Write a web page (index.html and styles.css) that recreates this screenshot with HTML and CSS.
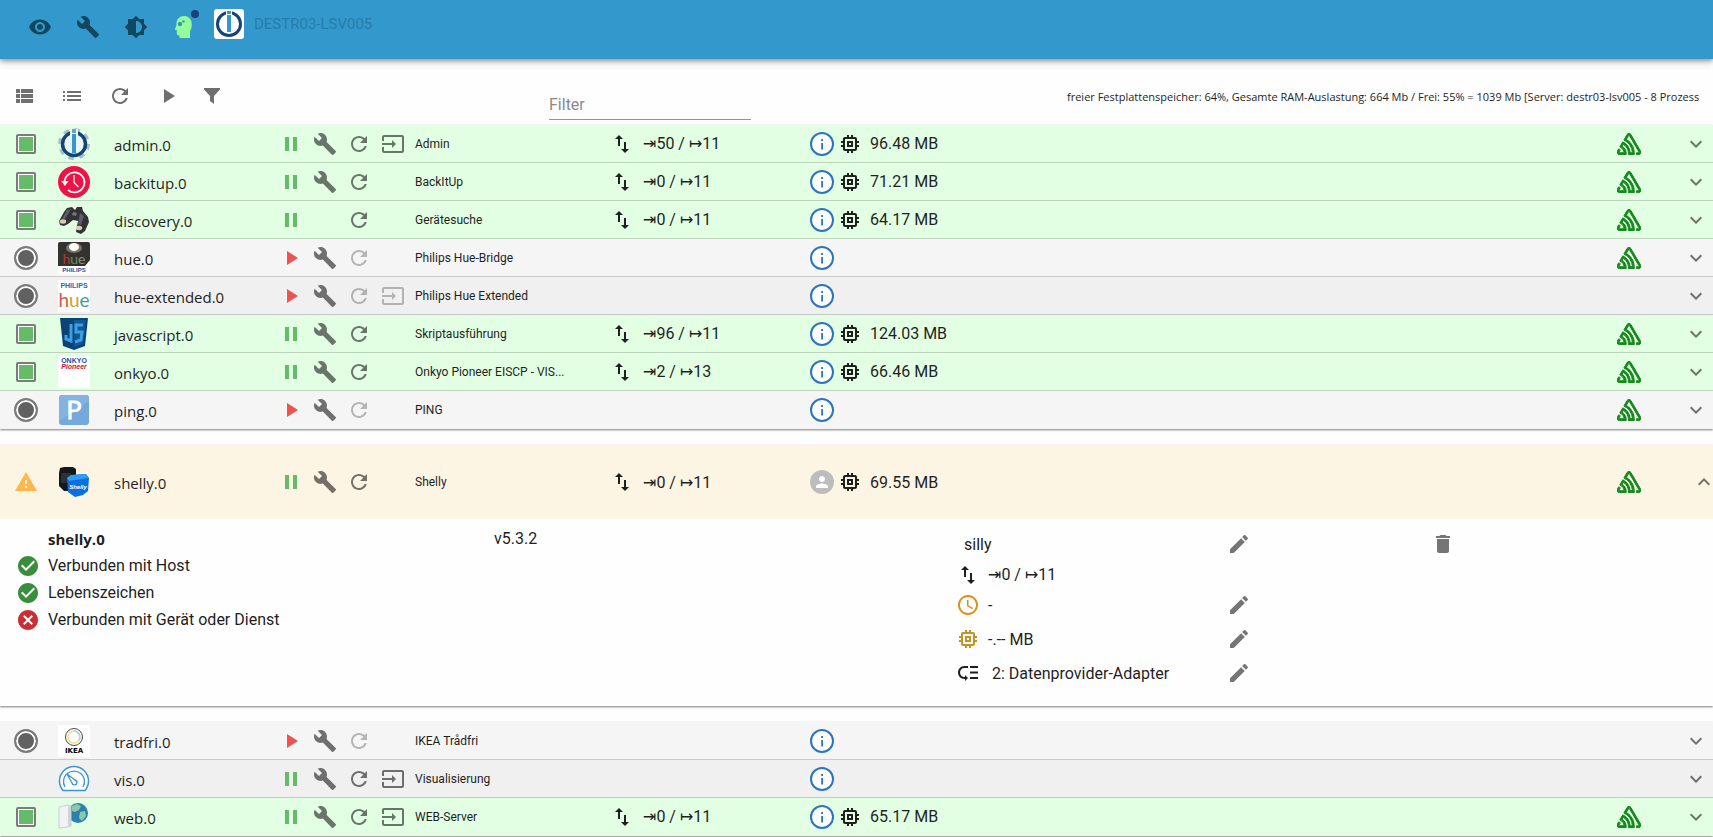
FILE: index.html
```html
<!DOCTYPE html>
<html lang="de">
<head>
  <meta charset="UTF-8">
  <meta name="viewport" content="width=device-width, initial-scale=1.0">
  <title>Instanzen</title>
  <link rel="stylesheet" href="styles.css">
</head>
<body>
  <!-- Icon sprite -->
  <svg class="sprite">
    <symbol id="eye" viewBox="0 0 24 24"><path d="M12 4.5C7 4.5 2.73 7.61 1 12c1.73 4.39 6 7.5 11 7.5s9.27-3.11 11-7.5c-1.73-4.39-6-7.5-11-7.5zM12 17c-2.76 0-5-2.24-5-5s2.24-5 5-5 5 2.24 5 5-2.24 5-5 5zm0-8c-1.66 0-3 1.34-3 3s1.34 3 3 3 3-1.34 3-3-1.34-3-3-3z"/></symbol>
    <symbol id="wrench" viewBox="0 0 24 24"><path d="M22.7 19l-9.1-9.1c.9-2.3.4-5-1.5-6.9-2-2-5-2.4-7.4-1.3L9 6 6 9 1.6 4.7C.4 7.1.9 10.1 2.9 12.1c1.9 1.9 4.6 2.4 6.9 1.5l9.1 9.1c.4.4 1 .4 1.4 0l2.3-2.3c.5-.4.5-1.1.1-1.4z"/></symbol>
    <symbol id="brightness" viewBox="0 0 24 24"><path d="M20 15.31L23.31 12 20 8.69V4h-4.69L12 .69 8.69 4H4v4.69L.69 12 4 15.31V20h4.69L12 23.31 15.31 20H20v-4.69zM12 18V6c3.31 0 6 2.69 6 6s-2.69 6-6 6z"/></symbol>
    <symbol id="head" viewBox="0 0 24 24"><path d="M12.500 1C7.500 1 4.500 4.300 4.500 8.500v1.500L3 14c-.2.600.1 1 .7 1h1.100v3.500c0 1.100.9 2 2 2H7.500V23H18v-7c1.300-1.600 1.800-4 1.800-6.500C19.800 4.600 17 1 12.500 1z"/><g fill="#3a94b8"><circle cx="8" cy="9" r="2.200"/><circle cx="11.500" cy="6.500" r="1.200"/></g></symbol>
    <symbol id="view-list" viewBox="0 0 24 24"><path d="M4 14h4v-4H4v4zm0 5h4v-4H4v4zM4 9h4V5H4v4zm5 5h12v-4H9v4zm0 5h12v-4H9v4zM9 5v4h12V5H9z"/></symbol>
    <symbol id="list" viewBox="0 0 24 24"><path d="M3 13h2v-2H3v2zm0 4h2v-2H3v2zm0-8h2V7H3v2zm4 4h14v-2H7v2zm0 4h14v-2H7v2zM7 7v2h14V7H7z"/></symbol>
    <symbol id="refresh" viewBox="0 0 24 24"><path d="M17.65 6.35C16.2 4.9 14.21 4 12 4c-4.42 0-7.99 3.58-7.99 8s3.57 8 7.990 8c3.730 0 6.840-2.550 7.730-6h-2.080c-.82 2.330-3.040 4-5.650 4-3.310 0-6-2.690-6-6s2.690-6 6-6c1.660 0 3.140.69 4.220 1.780L13 11h7V4l-2.350 2.350z"/></symbol>
    <symbol id="play" viewBox="0 0 24 24"><path d="M8 5v14l11-7z"/></symbol>
    <symbol id="pause" viewBox="0 0 24 24"><path d="M6 19h4V5H6v14zm8-14v14h4V5h-4z"/></symbol>
    <symbol id="funnel" viewBox="0 0 24 24"><path d="M4 4h16v1.500l-6 6.500v8l-4-3v-5L4 5.500z"/></symbol>
    <symbol id="input" viewBox="0 0 24 24"><path d="M21 3.010H3c-1.100 0-2 .9-2 2V9h2V4.990h18v14.030H3V15H1v4.010c0 1.100.9 1.980 2 1.980h18c1.100 0 2-.88 2-1.980v-14c0-1.110-.9-2-2-2zM11 16l4-4-4-4v3H1v2h10v3z"/></symbol>
    <symbol id="updown" viewBox="0 0 24 24"><path d="M9 3L5 6.990h3V14h2V6.990h3L9 3zm7 14.010V10h-2v7.010h-3L15 21l4-3.990h-3z"/></symbol>
    <symbol id="memory" viewBox="0 0 24 24"><path d="M15 9H9v6h6V9zm-2 4h-2v-2h2v2zm8-2V9h-2V7c0-1.100-.9-2-2-2h-2V3h-2v2h-2V3H9v2H7c-1.100 0-2 .9-2 2v2H3v2h2v2H3v2h2v2c0 1.100.9 2 2 2h2v2h2v-2h2v2h2v-2h2c1.100 0 2-.9 2-2v-2h2v-2h-2v-2h2zm-4 6H7V7h10v10z"/></symbol>
    <symbol id="info" viewBox="0 0 24 24"><circle cx="12" cy="12" r="11" fill="#fff" stroke="#2a74c4" stroke-width="2"/><path fill="#2a74c4" d="M11.200 7h1.800v2h-1.800zM11.200 11h1.800v6.500h-1.800z"/></symbol>
    <symbol id="user" viewBox="0 0 24 24"><circle cx="12" cy="12" r="12" fill="#bdbdbd"/><path fill="#fff" d="M12 12c1.660 0 3-1.340 3-3s-1.340-3-3-3-3 1.340-3 3 1.340 3 3 3zm0 1.500c-2 0-6 1-6 3V18h12v-1.500c0-2-4-3-6-3z"/></symbol>
    <symbol id="sentry" viewBox="0 0 24 24"><path d="M13.91 2.505c-.873-1.448-2.972-1.448-3.844 0L6.904 7.920a15.478 15.478 0 0 1 8.530 12.811h-2.221A13.301 13.301 0 0 0 5.784 9.814l-2.926 5.060a7.650 7.650 0 0 1 4.435 5.848H2.194a.365.365 0 0 1-.298-.534l1.413-2.402a5.160 5.160 0 0 0-1.614-.913L.296 19.275a2.182 2.182 0 0 0 .812 2.999 2.240 2.240 0 0 0 1.086.288h6.983a9.322 9.322 0 0 0-3.845-8.318l1.110-1.922a11.470 11.470 0 0 1 4.950 10.240h5.915a17.242 17.242 0 0 0-7.885-15.280l2.244-3.845a.37.37 0 0 1 .504-.13c.255.140 9.750 16.708 9.928 16.900a.365.365 0 0 1-.327.543h-2.287c.029.612.029 1.223 0 1.831h2.297a2.206 2.206 0 0 0 1.922-3.310z"/></symbol>
    <symbol id="down" viewBox="0 0 24 24"><path d="M16.590 8.590L12 13.170 7.410 8.590 6 10l6 6 6-6z"/></symbol>
    <symbol id="up" viewBox="0 0 24 24"><path d="M12 8l-6 6 1.410 1.410L12 10.830l4.590 4.580L18 14z"/></symbol>
    <symbol id="warning" viewBox="0 0 24 24"><path d="M1 21h22L12 2 1 21zm12-3h-2v-2h2v2zm0-4h-2v-4h2v4z"/></symbol>
    <symbol id="check" viewBox="0 0 24 24"><path d="M12 2C6.480 2 2 6.480 2 12s4.480 10 10 10 10-4.480 10-10S17.520 2 12 2zm-2 15l-5-5 1.410-1.410L10 14.170l7.590-7.590L19 8l-9 9z"/></symbol>
    <symbol id="cancel" viewBox="0 0 24 24"><path d="M12 2C6.470 2 2 6.470 2 12s4.470 10 10 10 10-4.470 10-10S17.530 2 12 2zm5 13.590L15.590 17 12 13.410 8.410 17 7 15.590 10.590 12 7 8.410 8.410 7 12 10.590 15.590 7 17 8.410 13.410 12 17 15.590z"/></symbol>
    <symbol id="edit" viewBox="0 0 24 24"><path d="M3 17.250V21h3.750L17.810 9.940l-3.750-3.750L3 17.250zM20.710 7.040c.39-.39.39-1.020 0-1.410l-2.340-2.340c-.39-.39-1.020-.39-1.410 0l-1.830 1.830 3.750 3.750 1.830-1.830z"/></symbol>
    <symbol id="trash" viewBox="0 0 24 24"><path d="M6 19c0 1.100.9 2 2 2h8c1.100 0 2-.9 2-2V7H6v12zM19 4h-3.500l-1-1h-5l-1 1H5v2h14V4z"/></symbol>
    <symbol id="clock" viewBox="0 0 24 24"><path d="M11.990 2C6.470 2 2 6.480 2 12s4.470 10 9.990 10C17.520 22 22 17.520 22 12S17.520 2 11.990 2zM12 20c-4.420 0-8-3.580-8-8s3.580-8 8-8 8 3.580 8 8-3.580 8-8 8zm.5-13H11v6l5.250 3.150.75-1.230-4.500-2.670z"/></symbol>
    <symbol id="priority" viewBox="0 0 24 24"><path d="M14 5h8v2h-8zm0 5.500h8v2h-8zm0 5.500h8v2h-8zM2 11.500C2 15.080 4.920 18 8.500 18H9v2l3-3-3-3v2h-.5C6.020 16 4 13.980 4 11.500S6.020 7 8.500 7H12V5H8.500C4.920 5 2 7.920 2 11.500z"/></symbol>
  </svg>

  <header class="appbar">
    <nav class="appbar-actions">
      <button class="icon-btn"><svg class="icon"><use href="#eye"/></svg></button>
      <button class="icon-btn"><svg class="icon"><use href="#wrench"/></svg></button>
      <button class="icon-btn"><svg class="icon"><use href="#brightness"/></svg></button>
      <button class="icon-btn expert"><svg class="icon"><use href="#head"/></svg><span class="badge"></span></button>
    </nav>
    <a class="host" href="#">
      <svg class="host-logo" viewBox="0 0 30 30">
        <rect width="30" height="30" rx="3" fill="#fff"/>
        <circle cx="15" cy="15" r="11.500" fill="none" stroke="#164477" stroke-width="3"/>
        <rect x="12" y="1" width="6" height="5" fill="#fff"/>
        <rect x="13" y="6" width="4" height="17" fill="#3399cc"/>
        <rect x="13" y="2" width="4" height="3" fill="#3399cc"/>
      </svg>
      <span>DESTR03-LSV005</span>
    </a>
  </header>

  <div class="toolbar">
    <div class="toolbar-actions">
      <button class="icon-btn"><svg class="icon"><use href="#view-list"/></svg></button>
      <button class="icon-btn"><svg class="icon"><use href="#list"/></svg></button>
      <button class="icon-btn"><svg class="icon"><use href="#refresh"/></svg></button>
      <button class="icon-btn"><svg class="icon"><use href="#play"/></svg></button>
      <button class="icon-btn small"><svg class="icon"><use href="#funnel"/></svg></button>
    </div>
    <input class="filter" type="text" placeholder="Filter" aria-label="Filter">
    <p class="host-info">freier Festplattenspeicher: 64%, Gesamte RAM-Auslastung: 664 Mb / Frei: 55% = 1039 Mb [Server: destr03-lsv005 - 8 Prozess</p>
  </div>

  <main>
    <section class="group">
      <div class="row running">
        <div class="status"><span class="square"></span></div>
        <svg class="logo" viewBox="0 0 32 32">
          <circle cx="16" cy="16" r="14" fill="none" stroke="#a9bdd0" stroke-width="4" stroke-dasharray="5.500 5.500"/>
          <circle cx="16" cy="16" r="11.500" fill="#e8f6f6" stroke="#164477" stroke-width="3.500"/>
          <rect x="12" y="1" width="8" height="6" fill="#e3ffe3"/>
          <rect x="14" y="1" width="4" height="4" fill="#7a9db9"/>
          <rect x="14" y="6" width="4" height="19" fill="#3399cc"/>
        </svg>
        <span class="name">admin.0</span>
        <div class="actions">
          <button class="act green"><svg class="icon"><use href="#pause"/></svg></button>
          <button class="act"><svg class="icon"><use href="#wrench"/></svg></button>
          <button class="act"><svg class="icon"><use href="#refresh"/></svg></button>
          <button class="act"><svg class="icon"><use href="#input"/></svg></button>
        </div>
        <span class="title">Admin</span>
        <div class="events"><svg class="icon"><use href="#updown"/></svg><span><i>⇥</i>50 / <i>↦</i>11</span></div>
        <div class="usage"><svg class="icon"><use href="#info"/></svg><svg class="icon"><use href="#memory"/></svg><span>96.48 MB</span></div>
        <svg class="icon sentry"><use href="#sentry"/></svg>
        <button class="expand"><svg class="icon"><use href="#down"/></svg></button>
      </div>

      <div class="row running">
        <div class="status"><span class="square"></span></div>
        <svg class="logo" viewBox="0 0 32 32">
          <circle cx="16" cy="16" r="16" fill="#ee1246"/>
          <path d="M6.500 17A10 10 0 1 1 10 24" fill="none" stroke="#fff" stroke-width="1.800"/>
          <path d="M3 15h7.500l-3.500 5z" fill="#fff"/>
          <path d="M16 9v7.500l4.500 4.500" fill="none" stroke="#fff" stroke-width="1.300"/>
        </svg>
        <span class="name">backitup.0</span>
        <div class="actions">
          <button class="act green"><svg class="icon"><use href="#pause"/></svg></button>
          <button class="act"><svg class="icon"><use href="#wrench"/></svg></button>
          <button class="act"><svg class="icon"><use href="#refresh"/></svg></button>
        </div>
        <span class="title">BackItUp</span>
        <div class="events"><svg class="icon"><use href="#updown"/></svg><span><i>⇥</i>0 / <i>↦</i>11</span></div>
        <div class="usage"><svg class="icon"><use href="#info"/></svg><svg class="icon"><use href="#memory"/></svg><span>71.21 MB</span></div>
        <svg class="icon sentry"><use href="#sentry"/></svg>
        <button class="expand"><svg class="icon"><use href="#down"/></svg></button>
      </div>

      <div class="row running">
        <div class="status"><span class="square"></span></div>
        <svg class="logo" viewBox="0 0 32 32">
          <path d="M1 17l5-9 3-4 5-1 3 3 2-3 5 0 1 4 5 6 1 5-4 9-4 3-5-2 1-6 1-5-5-1-5 4-4 2-4-1z" fill="#333337"/>
          <path d="M9 6l4-1-6 10-3 0zM22 9l4 3-3 9-3-1z" fill="#5d5d64"/>
          <path d="M15 8l4 1-1 3-4-1z" fill="#77777e"/>
          <ellipse cx="5" cy="17.500" rx="3.200" ry="2.200" fill="#d8cdb4"/>
          <ellipse cx="21" cy="24" rx="3.200" ry="2.200" fill="#d8cdb4"/>
        </svg>
        <span class="name">discovery.0</span>
        <div class="actions">
          <button class="act green"><svg class="icon"><use href="#pause"/></svg></button>
          <span class="act"></span>
          <button class="act"><svg class="icon"><use href="#refresh"/></svg></button>
        </div>
        <span class="title">Gerätesuche</span>
        <div class="events"><svg class="icon"><use href="#updown"/></svg><span><i>⇥</i>0 / <i>↦</i>11</span></div>
        <div class="usage"><svg class="icon"><use href="#info"/></svg><svg class="icon"><use href="#memory"/></svg><span>64.17 MB</span></div>
        <svg class="icon sentry"><use href="#sentry"/></svg>
        <button class="expand"><svg class="icon"><use href="#down"/></svg></button>
      </div>

      <div class="row stopped">
        <div class="status"><span class="dot"></span></div>
        <svg class="logo" viewBox="0 0 32 32">
          <rect y="20" width="32" height="12" fill="#fff"/>
          <path d="M2 0h28a2 2 0 0 1 2 2v16l-5 6H0V2a2 2 0 0 1 2-2z" fill="#333230"/>
          <ellipse cx="16" cy="6" rx="8" ry="5" fill="#77756c"/>
          <ellipse cx="16" cy="5" rx="5" ry="4" fill="#fffdf0"/>
          <text class="t-hue" x="16" y="22" font-size="14" text-anchor="middle"><tspan fill="#b0392c">h</tspan><tspan fill="#5f9447">u</tspan><tspan fill="#8a8a80">e</tspan></text>
          <text class="t-bold" x="16" y="30" font-size="6" text-anchor="middle" fill="#1c4fa0">PHILIPS</text>
        </svg>
        <span class="name">hue.0</span>
        <div class="actions">
          <button class="act red"><svg class="icon"><use href="#play"/></svg></button>
          <button class="act"><svg class="icon"><use href="#wrench"/></svg></button>
          <button class="act" disabled><svg class="icon"><use href="#refresh"/></svg></button>
        </div>
        <span class="title">Philips Hue-Bridge</span>
        <div class="events"></div>
        <div class="usage"><svg class="icon"><use href="#info"/></svg></div>
        <svg class="icon sentry"><use href="#sentry"/></svg>
        <button class="expand"><svg class="icon"><use href="#down"/></svg></button>
      </div>

      <div class="row stopped even">
        <div class="status"><span class="dot"></span></div>
        <svg class="logo" viewBox="0 0 32 32">
          <rect width="32" height="32" fill="#fff"/>
          <text class="t-bold" x="16" y="8" font-size="7" text-anchor="middle" fill="#1a6cb4">PHILIPS</text>
          <text class="t-hue" x="16" y="27" font-size="19" text-anchor="middle"><tspan fill="#dd5544">h</tspan><tspan fill="#c9a227">u</tspan><tspan fill="#3f9fa0">e</tspan></text>
        </svg>
        <span class="name">hue-extended.0</span>
        <div class="actions">
          <button class="act red"><svg class="icon"><use href="#play"/></svg></button>
          <button class="act"><svg class="icon"><use href="#wrench"/></svg></button>
          <button class="act" disabled><svg class="icon"><use href="#refresh"/></svg></button>
          <button class="act" disabled><svg class="icon"><use href="#input"/></svg></button>
        </div>
        <span class="title">Philips Hue Extended</span>
        <div class="events"></div>
        <div class="usage"><svg class="icon"><use href="#info"/></svg></div>
        <span class="icon"></span>
        <button class="expand"><svg class="icon"><use href="#down"/></svg></button>
      </div>

      <div class="row running">
        <div class="status"><span class="square"></span></div>
        <svg class="logo" viewBox="0 0 32 32">
          <path d="M2 0h28l-3 28-11 4-11-4z" fill="#0c4276"/>
          <path d="M16 2h12l-3 24-9 3z" fill="#14568f"/>
          <path d="M13 6v17l-5-2v-4M25 7h-7v7h6l-1 8-6 2" fill="none" stroke="#3ba0e6" stroke-width="3"/>
        </svg>
        <span class="name">javascript.0</span>
        <div class="actions">
          <button class="act green"><svg class="icon"><use href="#pause"/></svg></button>
          <button class="act"><svg class="icon"><use href="#wrench"/></svg></button>
          <button class="act"><svg class="icon"><use href="#refresh"/></svg></button>
        </div>
        <span class="title">Skriptausführung</span>
        <div class="events"><svg class="icon"><use href="#updown"/></svg><span><i>⇥</i>96 / <i>↦</i>11</span></div>
        <div class="usage"><svg class="icon"><use href="#info"/></svg><svg class="icon"><use href="#memory"/></svg><span>124.03 MB</span></div>
        <svg class="icon sentry"><use href="#sentry"/></svg>
        <button class="expand"><svg class="icon"><use href="#down"/></svg></button>
      </div>

      <div class="row running">
        <div class="status"><span class="square"></span></div>
        <svg class="logo" viewBox="0 0 32 32">
          <rect width="32" height="32" fill="#fff"/>
          <text class="t-bold" x="16" y="7" font-size="7" text-anchor="middle" fill="#1c4fa0">ONKYO</text>
          <text class="t-bold t-italic" x="16" y="13" font-size="7" text-anchor="middle" fill="#c3123f">Pioneer</text>
        </svg>
        <span class="name">onkyo.0</span>
        <div class="actions">
          <button class="act green"><svg class="icon"><use href="#pause"/></svg></button>
          <button class="act"><svg class="icon"><use href="#wrench"/></svg></button>
          <button class="act"><svg class="icon"><use href="#refresh"/></svg></button>
        </div>
        <span class="title">Onkyo Pioneer EISCP - VIS...</span>
        <div class="events"><svg class="icon"><use href="#updown"/></svg><span><i>⇥</i>2 / <i>↦</i>13</span></div>
        <div class="usage"><svg class="icon"><use href="#info"/></svg><svg class="icon"><use href="#memory"/></svg><span>66.46 MB</span></div>
        <svg class="icon sentry"><use href="#sentry"/></svg>
        <button class="expand"><svg class="icon"><use href="#down"/></svg></button>
      </div>

      <div class="row stopped">
        <div class="status"><span class="dot"></span></div>
        <svg class="logo" viewBox="0 0 32 32">
          <rect x="1" y="1" width="30" height="30" rx="3" fill="#74a9dc"/>
          <path d="M4 1h24a3 3 0 0 1 3 3v3L1 27V4a3 3 0 0 1 3-3z" fill="#84b3e1"/>
          <text class="t-p" x="16" y="25" font-size="26" text-anchor="middle" fill="#fff" stroke="#fff">P</text>
        </svg>
        <span class="name">ping.0</span>
        <div class="actions">
          <button class="act red"><svg class="icon"><use href="#play"/></svg></button>
          <button class="act"><svg class="icon"><use href="#wrench"/></svg></button>
          <button class="act" disabled><svg class="icon"><use href="#refresh"/></svg></button>
        </div>
        <span class="title">PING</span>
        <div class="events"></div>
        <div class="usage"><svg class="icon"><use href="#info"/></svg></div>
        <svg class="icon sentry"><use href="#sentry"/></svg>
        <button class="expand"><svg class="icon"><use href="#down"/></svg></button>
      </div>
    </section>

    <!-- Expanded instance -->
    <section class="group">
      <div class="row warn open">
        <div class="status"><svg class="icon warning"><use href="#warning"/></svg></div>
        <svg class="logo" viewBox="0 0 32 32">
          <path d="M2 2l4-1h9l3 2v14l-3 8H6l-5-5V7z" fill="#15171a"/>
          <rect x="3" y="7" width="10" height="10" fill="#2b3036"/>
          <path d="M9 12l4-3 15-1 3 4-1 13-5 4-8 2-7-5z" fill="#0a6fe0"/>
          <path d="M9 12l4-3 15-1 2 4-19 3z" fill="#2f9cf5"/>
          <text class="t-bold t-italic" x="20" y="23" font-size="6" text-anchor="middle" fill="#fff">Shelly</text>
        </svg>
        <span class="name">shelly.0</span>
        <div class="actions">
          <button class="act green"><svg class="icon"><use href="#pause"/></svg></button>
          <button class="act"><svg class="icon"><use href="#wrench"/></svg></button>
          <button class="act"><svg class="icon"><use href="#refresh"/></svg></button>
        </div>
        <span class="title">Shelly</span>
        <div class="events"><svg class="icon"><use href="#updown"/></svg><span><i>⇥</i>0 / <i>↦</i>11</span></div>
        <div class="usage"><svg class="icon"><use href="#user"/></svg><svg class="icon"><use href="#memory"/></svg><span>69.55 MB</span></div>
        <svg class="icon sentry"><use href="#sentry"/></svg>
        <button class="expand"><svg class="icon"><use href="#up"/></svg></button>
      </div>
      <div class="details">
        <ul class="states">
          <li><b>shelly.0</b></li>
          <li><svg class="icon ok"><use href="#check"/></svg>Verbunden mit Host</li>
          <li><svg class="icon ok"><use href="#check"/></svg>Lebenszeichen</li>
          <li><svg class="icon bad"><use href="#cancel"/></svg>Verbunden mit Gerät oder Dienst</li>
        </ul>
        <div class="version">v5.3.2</div>
        <div class="settings">
          <div class="setting"><span class="level">silly</span><button class="act"><svg class="icon"><use href="#edit"/></svg></button></div>
          <div class="setting plain"><svg class="icon"><use href="#updown"/></svg><span><i>⇥</i>0 / <i>↦</i>11</span></div>
          <div class="setting"><svg class="icon amber"><use href="#clock"/></svg><span>-</span><button class="act"><svg class="icon"><use href="#edit"/></svg></button></div>
          <div class="setting"><svg class="icon gold"><use href="#memory"/></svg><span>-.-- MB</span><button class="act"><svg class="icon"><use href="#edit"/></svg></button></div>
          <div class="setting"><svg class="icon"><use href="#priority"/></svg><span class="tier">2: Datenprovider-Adapter</span><button class="act"><svg class="icon"><use href="#edit"/></svg></button></div>
        </div>
        <div class="remove"><button class="act"><svg class="icon"><use href="#trash"/></svg></button></div>
      </div>
    </section>

    <section class="group">
      <div class="row stopped">
        <div class="status"><span class="dot"></span></div>
        <svg class="logo" viewBox="0 0 32 32">
          <rect width="32" height="32" fill="#fff"/>
          <circle cx="16" cy="12" r="8.500" fill="#fff" stroke="#4a4a4a" stroke-width="1"/>
          <circle cx="16" cy="12" r="6" fill="none" stroke="#f0dc82" stroke-width="1.500"/>
          <path d="M16 6a6 6 0 0 1 5 9" fill="none" stroke="#a8d4ec" stroke-width="1.500"/>
          <text class="t-wide" x="16" y="28" font-size="7" text-anchor="middle">IKEA</text>
        </svg>
        <span class="name">tradfri.0</span>
        <div class="actions">
          <button class="act red"><svg class="icon"><use href="#play"/></svg></button>
          <button class="act"><svg class="icon"><use href="#wrench"/></svg></button>
          <button class="act" disabled><svg class="icon"><use href="#refresh"/></svg></button>
        </div>
        <span class="title">IKEA Trådfri</span>
        <div class="events"></div>
        <div class="usage"><svg class="icon"><use href="#info"/></svg></div>
        <span class="icon"></span>
        <button class="expand"><svg class="icon"><use href="#down"/></svg></button>
      </div>

      <div class="row stopped even">
        <div class="status"></div>
        <svg class="logo" viewBox="0 0 32 32" fill="none" stroke="#3a96d0">
          <path d="M5 27.500a14.500 14.500 0 1 1 22 0z" fill="#fff" stroke-width="1.500"/>
          <path d="M7 24a10.500 10.500 0 1 1 18 0" stroke-width="1.300"/>
          <path d="M9 11l8 6a2.500 2.500 0 1 1-3 3z" stroke-width="1.300"/>
        </svg>
        <span class="name">vis.0</span>
        <div class="actions">
          <button class="act green"><svg class="icon"><use href="#pause"/></svg></button>
          <button class="act"><svg class="icon"><use href="#wrench"/></svg></button>
          <button class="act"><svg class="icon"><use href="#refresh"/></svg></button>
          <button class="act"><svg class="icon"><use href="#input"/></svg></button>
        </div>
        <span class="title">Visualisierung</span>
        <div class="events"></div>
        <div class="usage"><svg class="icon"><use href="#info"/></svg></div>
        <span class="icon"></span>
        <button class="expand"><svg class="icon"><use href="#down"/></svg></button>
      </div>

      <div class="row running">
        <div class="status"><span class="square"></span></div>
        <svg class="logo" viewBox="0 0 32 32">
          <circle cx="20" cy="12" r="10" fill="#2d7fae"/>
          <path d="M14 5l5-2 4 2-2 4-4 2-3-1zM22 11l5-1 1 5-4 5-3-3z" fill="#8cc8a8"/>
          <path d="M1 6l9-2 3 1v20l-3 1-9 1z" fill="#f0f2f4" stroke="#c9ced2"/>
          <path d="M10 5l3 1v19l-3 1z" fill="#cdd3d8"/>
        </svg>
        <span class="name">web.0</span>
        <div class="actions">
          <button class="act green"><svg class="icon"><use href="#pause"/></svg></button>
          <button class="act"><svg class="icon"><use href="#wrench"/></svg></button>
          <button class="act"><svg class="icon"><use href="#refresh"/></svg></button>
          <button class="act"><svg class="icon"><use href="#input"/></svg></button>
        </div>
        <span class="title">WEB-Server</span>
        <div class="events"><svg class="icon"><use href="#updown"/></svg><span><i>⇥</i>0 / <i>↦</i>11</span></div>
        <div class="usage"><svg class="icon"><use href="#info"/></svg><svg class="icon"><use href="#memory"/></svg><span>65.17 MB</span></div>
        <svg class="icon sentry"><use href="#sentry"/></svg>
        <button class="expand"><svg class="icon"><use href="#down"/></svg></button>
      </div>
    </section>
  </main>
</body>
</html>
```
FILE: styles.css
```css
* {
  margin: 0;
  padding: 0;
  box-sizing: border-box;
}

body {
  font-family: Roboto, sans-serif;
  font-size: 16px;
  color: #1f1f1f;
  background-color: #fefefe;
  overflow: hidden;
}

button {
  border: none;
  background: none;
  color: inherit;
  cursor: pointer;
}

.sprite {
  display: none;
}

.icon {
  display: block;
  flex: none;
  width: 24px;
  height: 24px;
  fill: currentColor;
}

/* App bar */
.appbar {
  display: flex;
  align-items: flex-start;
  height: 59px;
  padding: 3px 16px;
  background-color: #3399cc;
  box-shadow: 0 2px 4px rgba(0, 0, 0, 0.3), 0 4px 8px rgba(0, 0, 0, 0.15);
}

.appbar-actions {
  display: flex;
  color: #11475f;
}

.icon-btn {
  display: flex;
  align-items: center;
  justify-content: center;
  width: 48px;
  height: 48px;
}

.icon-btn.small {
  width: 40px;
}

.expert {
  position: relative;
  color: #93ff9b;
}

.badge {
  position: absolute;
  top: 7px;
  right: 9px;
  width: 8px;
  height: 8px;
  border-radius: 50%;
  background-color: #164477;
}

.host {
  display: flex;
  align-items: center;
  gap: 10px;
  margin: 6px 0 0 6px;
  font-size: 15px;
  color: #287ca8;
  text-decoration: none;
}

.host-logo {
  width: 30px;
  height: 30px;
}

/* Toolbar */
.toolbar {
  display: flex;
  align-items: center;
  height: 66px;
  padding-top: 8px;
}

.toolbar-actions {
  display: flex;
  flex: none;
  width: 549px;
  color: #6f6f6f;
}

.filter {
  flex: none;
  width: 202px;
  height: 31px;
  margin-top: 16px;
  padding-top: 2px;
  border: none;
  border-bottom: 1px solid #949494;
  background: none;
  font-family: inherit;
  font-size: 16px;
  color: #1f1f1f;
  outline: none;
}

.filter::placeholder {
  color: #8a8a8a;
  opacity: 1;
}

.host-info {
  flex: 1;
  min-width: 0;
  margin-left: 316px;
  font-family: "Open Sans", sans-serif;
  font-size: 11px;
  white-space: nowrap;
}

/* Instance list */
.group {
  margin-bottom: 16px;
  box-shadow: 0 1px 2px rgba(0, 0, 0, 0.5);
}

.row {
  display: grid;
  grid-template-columns: 52px 62px 160px 136px 200px 200px 1fr 24px 72px;
  align-items: center;
  height: 38px;
  border-bottom: 1px solid rgba(0, 0, 0, 0.17);
}

.row:last-child {
  border-bottom-color: transparent;
}

.running {
  background-color: #e3ffe3;
}

.stopped {
  background-color: #f5f5f5;
}

.stopped.even {
  background-color: #f0f0f0;
}

.warn {
  background-color: #fdf5e3;
}

.row.open {
  height: 74px;
  border-bottom: none;
}

.status {
  display: flex;
  justify-content: center;
}

.status .square {
  width: 20px;
  height: 20px;
  border: 2px solid #7b7b7b;
  border-radius: 2px;
  background: #66bb6a content-box;
  padding: 1px;
  box-shadow: inset 0 0 0 1px #ffffff;
}

.status .dot {
  width: 24px;
  height: 24px;
  border: 2px solid #7b7b7b;
  border-radius: 50%;
  background-color: #616161;
  box-shadow: inset 0 0 0 2px #ffffff;
}

.warning {
  color: #ffb74d;
}

.logo {
  width: 32px;
  height: 32px;
  margin-left: 6px;
}

.name {
  padding-top: 2px;
  font-family: "Open Sans", sans-serif;
  font-size: 15px;
}

.actions {
  display: flex;
}

.act {
  display: flex;
  justify-content: center;
  width: 34px;
  color: rgba(0, 0, 0, 0.54);
}

.act:disabled {
  color: rgba(0, 0, 0, 0.26);
  cursor: default;
}

.act.green {
  color: #66bb6a;
}

.act.red {
  color: #ef5350;
}

.title {
  max-width: 165px;
  padding-left: 5px;
  font-size: 12px;
  white-space: nowrap;
}

.events {
  display: flex;
  align-items: center;
  gap: 9px;
}

.usage {
  display: flex;
  align-items: center;
  gap: 4px;
}

.usage span {
  margin-left: 4px;
}

/* Event direction arrows */
i {
  font-family: "DejaVu Sans", sans-serif;
  font-size: 16px;
  font-style: normal;
  line-height: 1;
}

.sentry {
  color: #148a1c;
  stroke: currentColor;
  stroke-width: 1px;
}

.expand {
  display: flex;
  justify-self: end;
  margin-right: 5px;
  color: rgba(0, 0, 0, 0.54);
}

.open .expand {
  margin-right: -3px;
}

/* Details of the expanded instance */
.details {
  display: grid;
  grid-template-columns: 494fr 462fr 300fr 457fr;
  min-height: 187px;
  padding: 6px 0 16px;
}

.states {
  list-style: none;
  padding-left: 16px;
}

.states li {
  display: flex;
  align-items: center;
  gap: 8px;
  height: 27px;
}

.states b {
  padding-left: 32px;
  font-family: "Open Sans", sans-serif;
  font-size: 15px;
}

.ok {
  color: #388e3c;
}

.bad {
  color: #c92f35;
}

.version {
  line-height: 28px;
}

.settings {
  padding-top: 2px;
}

.setting {
  display: flex;
  align-items: center;
  gap: 8px;
  height: 34px;
}

.setting.plain {
  height: 27px;
}

.setting .act {
  margin-left: auto;
}

.setting .level {
  padding-left: 8px;
}

.setting .tier {
  padding-left: 4px;
}

.amber {
  color: #d9901c;
}

.gold {
  color: #c09526;
}

.remove {
  padding: 7px 0 0 170px;
}

/* Lettering inside the adapter logos */
.t-hue {
  font-family: Lato, sans-serif;
}

.t-p {
  font-family: "Open Sans", sans-serif;
}

.t-bold {
  font-family: "Liberation Sans", sans-serif;
  font-weight: 700;
}

.t-italic {
  font-style: italic;
}

.t-wide {
  font-family: "DejaVu Sans", sans-serif;
  font-weight: 700;
}
```
